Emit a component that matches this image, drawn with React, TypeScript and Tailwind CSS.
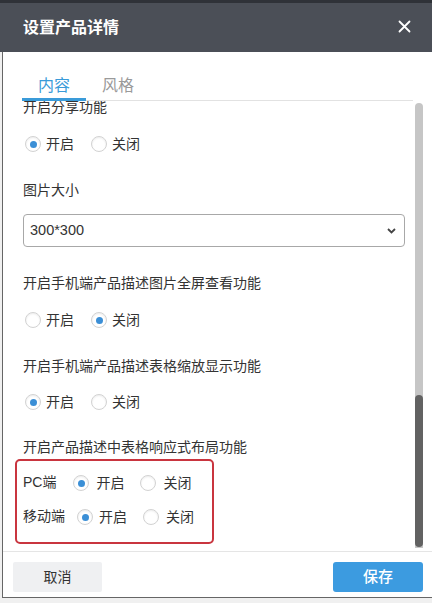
import React from "react";

const FONT = { fontFamily: '"Liberation Sans", "Noto Sans CJK SC", sans-serif' };

function Radio({ checked, label, gap = "ml-[5px]" }: { checked: boolean; label: string; gap?: string }) {
  return (
    <label className="flex items-center h-5">
      <span className="w-4 h-4 rounded-full border border-[#d2d2d2] bg-white flex items-center justify-center shadow-[inset_0_1px_2px_rgba(0,0,0,0.08)]">
        {checked && <span className="w-[7px] h-[7px] rounded-full bg-[#3b8fd6]" />}
      </span>
      <span className={`${gap} text-[14px] leading-5 text-[#333]`}>{label}</span>
    </label>
  );
}

function RadioRow({ on, className = "" }: { on: boolean; className?: string }) {
  return (
    <div className={`flex items-center gap-[17px] pl-[2px] ${className}`}>
      <Radio checked={on} label="开启" />
      <Radio checked={!on} label="关闭" />
    </div>
  );
}

function Label({ text, className = "" }: { text: string; className?: string }) {
  return <div className={`h-5 text-[14px] leading-5 text-[#333] whitespace-nowrap ${className}`}>{text}</div>;
}

export default function App() {
  return (
    <div className="w-[432px] h-[603px] bg-[#f0f0f0] overflow-hidden flex flex-col" style={FONT}>
      {/* backdrop strip */}
      <div className="h-[3px] bg-[#2f3238]" />

      {/* Header */}
      <div className="h-[49px] bg-[#4b4f57] flex items-center justify-between pl-[23px] pr-[21px]">
        <span className="text-white text-[16px] font-bold leading-6">设置产品详情</span>
        <svg width="13" height="13" viewBox="0 0 13 13" className="mt-[-2px]">
          <path d="M1.5 1.5 L11.5 11.5 M11.5 1.5 L1.5 11.5" stroke="#fff" strokeWidth="1.8" strokeLinecap="round" />
        </svg>
      </div>

      {/* Body */}
      <div className="ml-[2px] h-[546px] bg-white border-l border-b border-[#666] flex flex-col">
        {/* Tabs */}
        <div className="h-[49px] ml-[19px] w-[391px] flex items-end border-b border-[#e2e2e2]">
          <div className="px-4 -mb-px border-b-[3px] border-[#3a9bd9] text-[16px] leading-6 text-[#3a9bd9]">内容</div>
          <div className="px-4 -mb-px border-b-[3px] border-transparent text-[16px] leading-6 text-[#9a9a9a]">风格</div>
        </div>

        {/* Scroll area */}
        <div className="h-[450px] flex">
          <div className="flex-1 overflow-hidden pl-[20px] pr-[10px]">
            <div className="-mt-[4px]">
              <Label text="开启分享功能" />
              <RadioRow on className="mt-[17px]" />

              <Label text="图片大小" className="mt-[26px]" />
              <div className="mt-[14px] h-[33px] border border-[#a8a8a8] rounded-[4px] flex items-center justify-between pl-[6px] pr-[8px]">
                <span className="text-[14.5px] text-[#333]">300*300</span>
                <svg width="9" height="6" viewBox="0 0 9 6">
                  <path d="M1 1 L4.5 4.5 L8 1" stroke="#444" strokeWidth="1.8" fill="none" />
                </svg>
              </div>

              <Label text="开启手机端产品描述图片全屏查看功能" className="mt-[26px]" />
              <RadioRow on={false} className="mt-[17px]" />

              <Label text="开启手机端产品描述表格缩放显示功能" className="mt-[26px]" />
              <RadioRow on className="mt-[16px]" />

              <Label text="开启产品描述中表格响应式布局功能" className="mt-[25px]" />
              <div className="mt-[2px] -ml-[8px] w-[199px] h-[85px] border-2 border-[#c9353f] rounded-[5px] pl-[6px] pt-[12px]">
                <div className="flex items-center gap-4">
                  <span className="text-[14px] leading-5 text-[#333] mr-[1px] -mt-[3px]">PC端</span>
                  <Radio checked label="开启" gap="ml-[7px]" />
                  <Radio checked={false} label="关闭" gap="ml-[7px]" />
                </div>
                <div className="flex items-center gap-4 mt-[14px]">
                  <span className="text-[14px] leading-5 text-[#333] -mr-[4px] -mt-[3px]">移动端</span>
                  <Radio checked label="开启" gap="ml-[6px]" />
                  <Radio checked={false} label="关闭" gap="ml-[7px]" />
                </div>
              </div>
            </div>
          </div>

          {/* Scrollbar */}
          <div className="w-[8px] mr-[9px] pt-[2px] pb-[3px] flex flex-col">
            <div className="flex-1 bg-[#c6c6c6] rounded-t-full flex flex-col justify-end">
              <div className="h-[152px] mb-[1px] bg-[#626262] rounded-full" />
            </div>
          </div>
        </div>

        {/* Footer */}
        <div className="flex-1 border-t border-[#e5e5e5] pt-[10px] flex justify-between pl-[10px] pr-[9px]">
          <button className="w-[89px] h-[30px] bg-[#eff0f2] rounded-[2px] text-[14px] text-[#333]">取消</button>
          <button className="w-[90px] h-[30px] bg-[#3c9be0] rounded-[3px] text-[15px] font-medium text-white">保存</button>
        </div>
      </div>
    </div>
  );
}
